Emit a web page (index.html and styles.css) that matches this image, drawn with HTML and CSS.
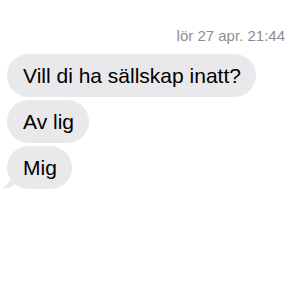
FILE: index.html
```html
<!DOCTYPE html>
<html lang="sv">
<head>
<meta charset="utf-8">
<link rel="stylesheet" href="styles.css">
</head>
<body>
<div class="thread">
  <div class="stamp">lör 27 apr. 21:44</div>
  <div class="msgs">
    <div class="bubble">Vill di ha sällskap inatt?</div>
    <div class="bubble">Av lig</div>
    <div class="bubble last">Mig
      <svg class="tail" width="14" height="16" viewBox="0 0 14 16"><path d="M10 0 C10 7 7 12 1 15 C6 16 11 14 14 11 L14 0 Z" fill="#e9e9eb"/></svg>
    </div>
  </div>
</div>
</body>
</html>
```
FILE: styles.css
```css
html, body { margin: 0; padding: 0; background: #fff; }
body { font-family: "Liberation Sans", Arial, sans-serif; width: 300px; height: 300px; overflow: hidden; }
.thread { display: flex; flex-direction: column; padding: 0 15px 0 7px; }
.stamp { align-self: flex-end; color: #8e8e93; font-size: 15px; line-height: 18px; margin-top: 27px; }
.msgs { display: flex; flex-direction: column; align-items: flex-start; gap: 3px; margin-top: 9px; }
.bubble { position: relative; background: #e9e9eb; color: #000; font-size: 21px; line-height: 25px; padding: 9px 15px 9px 16px; border-radius: 22px; }
.tail { position: absolute; left: -6px; bottom: 0; }
```
